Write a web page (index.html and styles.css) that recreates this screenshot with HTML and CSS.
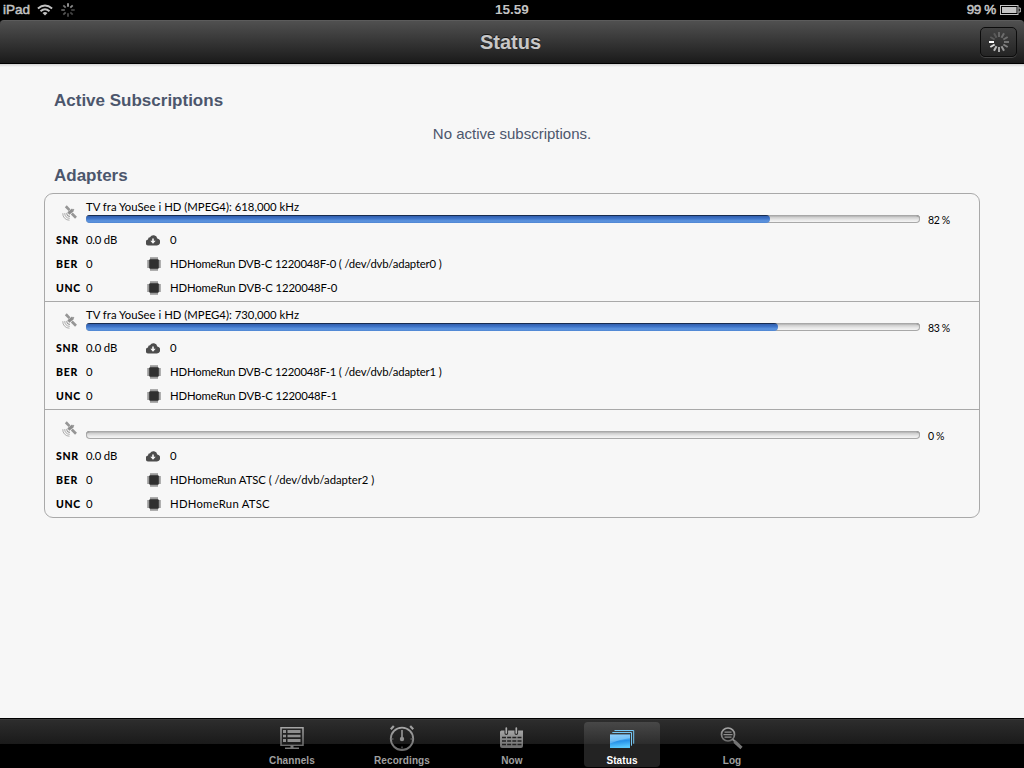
FILE: index.html
```html
<!DOCTYPE html>
<html lang="en">
<head>
<meta charset="utf-8">
<title>Status</title>
<link rel="stylesheet" href="styles.css">
</head>
<body>
<svg class="defs" width="0" height="0" aria-hidden="true">
  <defs>
    <linearGradient id="gray" x1="0" y1="0" x2="0" y2="1"><stop offset="0" stop-color="#a6a6a6"/><stop offset="1" stop-color="#6c6c6c"/></linearGradient>
    <linearGradient id="blue" x1="0" y1="0" x2=".15" y2="1"><stop offset="0" stop-color="#7cc4f7"/><stop offset=".45" stop-color="#4aa9f0"/><stop offset=".55" stop-color="#2590e8"/><stop offset="1" stop-color="#58c8ff"/></linearGradient>
    <symbol id="sat" viewBox="0 0 16 16">
      <path d="M3.800 1.300l3.700 3.800M9.800 8.500l4.200 4.200" stroke="#969696" stroke-width="2.700"/>
      <path d="M6.300 8.600l4.700-3.800" stroke="#8d8d8d" stroke-width="3.200"/>
      <path d="M10.500 5.400l1.500-1.200" stroke="#999" stroke-width="1.300"/>
      <path d="M4.900 8a2.700 2.700 0 0 0 3 3.300" fill="none" stroke="#999" stroke-width="1.100"/>
      <path d="M2.800 8a4.700 4.700 0 0 0 5 5.300M.8 8.200a6.500 6.500 0 0 0 6.700 7" fill="none" stroke="#a5a5a5" stroke-width=".9"/>
    </symbol>
    <symbol id="cloud" viewBox="0 0 14 11">
      <path d="M3.200 10.500A3 3 0 0 1 2 4.600 2.200 2.200 0 0 1 4 2.300 3.900 3.900 0 0 1 11.300 3.400 3.600 3.600 0 0 1 11 10.500z" fill="#4d4d4d"/>
      <path d="M6.200 3.600h1.600v2.200h1.900L7 8.800 4.300 5.800h1.900z" fill="#f7f7f7"/>
    </symbol>
    <symbol id="chip" viewBox="0 0 14 14">
      <path d="M3 .3h8v13.400H3zM.3 3h13.400v8H.3z" fill="#aaa"/>
      <path d="M4 .3v13.400M6 .3v13.400M8 .3v13.400M10 .3v13.400M.3 4h13.400M.3 6h13.400M.3 8h13.400M.3 10h13.400" stroke="#858585" stroke-width=".8"/>
      <rect x="2.200" y="2.200" width="9.600" height="9.600" rx="1" fill="#303030"/>
    </symbol>
  </defs>
</svg>

<div class="status-bar">
  <div class="carrier">
    <span>iPad</span>
    <svg class="wifi" width="16" height="12" viewBox="0 0 16 12" fill="none" stroke="#c4c4c4" stroke-width="1.900"><path d="M.9 4.500Q8-1.700 15.100 4.500M3.500 7.200Q8 3.200 12.500 7.200"/><path d="M5.500 9Q8 6.800 10.500 9L8 11.600z" fill="#c4c4c4" stroke="none"/></svg>
    <svg class="activity" width="14" height="14" viewBox="-7 -7 14 14" stroke-width="1.700">
      <path d="M0-3.200V-6.700" stroke="#aaa"/><path d="M2.300-2.300l2.400-2.400" stroke="#8b8b8b"/><path d="M3.200 0h3.500" stroke="#444"/><path d="M2.300 2.300l2.400 2.400" stroke="#444"/><path d="M0 3.200v3.500" stroke="#4c4c4c"/><path d="M-2.300 2.300l-2.400 2.400" stroke="#555"/><path d="M-3.200 0h-3.500" stroke="#666"/><path d="M-2.300-2.300l-2.400-2.400" stroke="#777"/>
    </svg>
  </div>
  <div class="clock">15.59</div>
  <div class="power"><span>99 %</span>
    <svg width="21" height="10" viewBox="0 0 21 10"><rect x=".5" y=".5" width="17.500" height="9" fill="none" stroke="#c4c4c4"/><path d="M2 2h14.500v6H2z" fill="#c4c4c4"/><path d="M18.500 3h1.800v4h-1.800" fill="none" stroke="#c4c4c4"/></svg>
  </div>
</div>

<div class="nav-wrap">
  <header class="nav-bar">
    <h1>Status</h1>
    <div class="refresh">
      <svg width="22" height="22" viewBox="-11 -11 22 22" stroke-width="2">
        <path d="M-5 0h-5" stroke="#fff"/><path d="M-5 0h-5" transform="rotate(30)" stroke="#5a5a5a"/><path d="M-5 0h-5" transform="rotate(60)" stroke="#5a5a5a"/><path d="M-5 0h-5" transform="rotate(90)" stroke="#666"/><path d="M-5 0h-5" transform="rotate(120)" stroke="#6c6c6c"/><path d="M-5 0h-5" transform="rotate(150)" stroke="#6e6e6e"/><path d="M-5 0h-5" transform="rotate(180)" stroke="#747474"/><path d="M-5 0h-5" transform="rotate(210)" stroke="#808080"/><path d="M-5 0h-5" transform="rotate(240)" stroke="#959595"/><path d="M-5 0h-5" transform="rotate(270)" stroke="#aaa"/><path d="M-5 0h-5" transform="rotate(300)" stroke="#bbb"/><path d="M-5 0h-5" transform="rotate(330)" stroke="#ddd"/>
      </svg>
    </div>
  </header>
</div>

<main>
  <h2>Active Subscriptions</h2>
  <p class="empty">No active subscriptions.</p>
  <h2 class="adapters-title">Adapters</h2>
  <section class="card">
    <article class="adapter">
      <div class="head">
        <svg class="sat" width="16" height="16"><use href="#sat"/></svg>
        <div class="signal"><div class="title">TV fra YouSee i HD (MPEG4): 618,000 kHz</div><div class="track"><div class="fill" style="width:82%"></div></div></div>
        <span class="percent">82 %</span>
      </div>
      <div class="line"><b>SNR</b><span class="value">0.0 dB</span><svg class="cloud" width="14" height="11"><use href="#cloud"/></svg><span>0</span></div>
      <div class="line"><b>BER</b><span class="value">0</span><svg width="14" height="14"><use href="#chip"/></svg><span class="path">HDHomeRun DVB-C 1220048F-0 ( /dev/dvb/adapter0 )</span></div>
      <div class="line"><b>UNC</b><span class="value">0</span><svg width="14" height="14"><use href="#chip"/></svg><span class="name">HDHomeRun DVB-C 1220048F-0</span></div>
    </article>
    <article class="adapter">
      <div class="head">
        <svg class="sat" width="16" height="16"><use href="#sat"/></svg>
        <div class="signal"><div class="title">TV fra YouSee i HD (MPEG4): 730,000 kHz</div><div class="track"><div class="fill" style="width:83%"></div></div></div>
        <span class="percent">83 %</span>
      </div>
      <div class="line"><b>SNR</b><span class="value">0.0 dB</span><svg class="cloud" width="14" height="11"><use href="#cloud"/></svg><span>0</span></div>
      <div class="line"><b>BER</b><span class="value">0</span><svg width="14" height="14"><use href="#chip"/></svg><span class="path">HDHomeRun DVB-C 1220048F-1 ( /dev/dvb/adapter1 )</span></div>
      <div class="line"><b>UNC</b><span class="value">0</span><svg width="14" height="14"><use href="#chip"/></svg><span class="name">HDHomeRun DVB-C 1220048F-1</span></div>
    </article>
    <article class="adapter atsc">
      <div class="head">
        <svg class="sat" width="16" height="16"><use href="#sat"/></svg>
        <div class="signal"><div class="title"></div><div class="track"></div></div>
        <span class="percent">0 %</span>
      </div>
      <div class="line"><b>SNR</b><span class="value">0.0 dB</span><svg class="cloud" width="14" height="11"><use href="#cloud"/></svg><span>0</span></div>
      <div class="line"><b>BER</b><span class="value">0</span><svg width="14" height="14"><use href="#chip"/></svg><span class="path">HDHomeRun ATSC ( /dev/dvb/adapter2 )</span></div>
      <div class="line"><b>UNC</b><span class="value">0</span><svg width="14" height="14"><use href="#chip"/></svg><span class="name">HDHomeRun ATSC</span></div>
    </article>
  </section>
</main>

<nav class="tab-bar">
  <div class="tab">
    <svg width="30" height="30" viewBox="0 1 30 30"><path d="M4 4.700h22v17.500H4z" fill="none" stroke="url(#gray)" stroke-width="1.500"/><path d="M6 7h3v3H6zM10.500 7h13v3h-13zM6 11.700h3v2.600H6zM10.500 11.700h13v2.600h-13zM6 16h3v3H6zM10.500 16h13v3h-13z" fill="#8e8e8e"/><path d="M13.500 22h3v2.500h5.500v1.500H8v-1.500h5.500z" fill="#777"/></svg>
    <span>Channels</span>
  </div>
  <div class="tab">
    <svg width="30" height="30" viewBox="0 .5 30 30"><circle cx="15" cy="15.300" r="11.200" fill="none" stroke="url(#gray)" stroke-width="1.900"/><path d="M3.800 5.700l3-3.200M26.200 5.700l-3-3.200" stroke="#a0a0a0" stroke-width="2.200"/><path d="M15 6.500v9" stroke="#999" stroke-width="1.600"/><circle cx="15" cy="15.500" r="2.200" fill="#909090"/><path d="M15 23v2M6.500 15.500h-2M25.500 15.500h-2" stroke="#777" stroke-width="1"/></svg>
    <span>Recordings</span>
  </div>
  <div class="tab">
    <svg width="30" height="30" viewBox="0 0 30 30"><path d="M4.500 6.500h3v2.800a1.800 1.800 0 0 0 3.600 0V6.500h6.400v2.800a1.800 1.800 0 0 0 3.600 0V6.500H26v15.500q0 2-2 2H5q-2 0-2-2V8q0-1.500 1.500-1.500z" fill="url(#gray)"/><path d="M9.300 4v5M19.300 4v5" stroke="#aaa" stroke-width="1.700" stroke-linecap="round"/><path d="M5 13.500h19.500M5 17h19.500M5 20.500h19.500" stroke="#222" stroke-width="1.700" stroke-dasharray="4 1.160"/></svg>
    <span>Now</span>
  </div>
  <div class="tab active">
    <svg width="30" height="30" viewBox="0 -1 30 30"><path d="M7.500 5.500h19.200v13.200M5.300 7.500h19.200v13.200" fill="none" stroke="#75c8f6" stroke-width="1"/><rect x="3" y="9.500" width="20" height="13.500" fill="url(#blue)"/><path d="M3 9.500h20v3.500Q13 14 3 18.500z" fill="#b0e2ff" opacity=".4"/></svg>
    <span>Status</span>
  </div>
  <div class="tab">
    <svg width="30" height="30" viewBox="0 0 30 30"><circle cx="11" cy="10.500" r="6.500" fill="none" stroke="url(#gray)" stroke-width="1.700"/><path d="M7.500 8.200h7M6.500 10.700h9M7.500 13.200h7" stroke="#8c8c8c" stroke-width="1.300"/><path d="M15.500 15.200l2.500 2.300" stroke="#888" stroke-width="1.800"/><path d="M17.500 17.500l7 6.500" stroke="#737373" stroke-width="3.200"/></svg>
    <span>Log</span>
  </div>
</nav>
</body>
</html>
```
FILE: styles.css
```css
* { box-sizing: border-box; }
body {
  margin: 0;
  width: 1024px;
  height: 768px;
  display: flex;
  flex-direction: column;
  overflow: hidden;
  background: #f7f7f7;
  font-family: "Liberation Sans", Arial, sans-serif;
}
svg { display: block; flex: none; }
.defs { position: absolute; }
h1, h2, p { margin: 0; }

.status-bar {
  height: 20px;
  flex: none;
  display: grid;
  grid-template-columns: 1fr auto 1fr;
  align-items: center;
  padding: 0 3px;
  background: #000;
  color: #c4c4c4;
  font-size: 13.500px;
  line-height: 18px;
}
.carrier { display: flex; align-items: center; }
.carrier span { width: 34px; margin-top: -1px; -webkit-text-stroke: .5px #c4c4c4; }
.activity { margin-left: 8px; }
.clock { margin-top: -1px; font-weight: bold; }
.power { display: flex; align-items: center; justify-content: flex-end; gap: 4px; -webkit-text-stroke: .5px #c4c4c4; }
.power span { margin-top: -1px; letter-spacing: -.35px; }
.power svg { margin-top: -1px; }

.nav-wrap { height: 44px; flex: none; background: #000; }
.nav-bar {
  height: 43px;
  display: grid;
  grid-template-columns: 1fr auto 1fr;
  align-items: center;
  padding: 0 7px 0 0;
  border-radius: 4px 4px 0 0;
  border-top: 1px solid #5c5c5c;
  background: linear-gradient(#505050, #1a1a1a);
}
.nav-bar h1 {
  grid-column: 2;
  margin-left: 4px;
  font-size: 20px;
  line-height: 24px;
  color: #c8c8c8;
  text-shadow: 0 -1px 0 #151515;
}
.refresh {
  justify-self: end;
  width: 37px;
  height: 30px;
  display: flex;
  align-items: center;
  justify-content: center;
  border: 1px solid #0c0c0c;
  border-radius: 5px;
  background: linear-gradient(#424242, #242424);
  box-shadow: 0 1px 0 #444;
}

main {
  flex: 1;
  padding: 25px 44px 0;
  background: linear-gradient(#d2d2d2, #f7f7f7 3px);
}
h2 {
  padding-left: 10px;
  font-size: 17px;
  line-height: 24px;
  color: #4c566c;
}
.empty { margin-top: 9px; text-align: center; font-size: 15px; line-height: 24px; color: #4c566c; }
.adapters-title { margin-top: 18px; }
.card {
  margin-top: 5px;
  border: 1px solid #a9a9a9;
  border-radius: 9px;
  color: #000;
  font: 11.300px/24px Lato, sans-serif;
}
.adapter { height: 108px; border-bottom: 1px solid #a9a9a9; }
.adapter:last-child { height: 107px; border-bottom: 0; }
.head { height: 34px; display: flex; padding-left: 17px; }
.sat { margin-top: 11px; }
.signal { width: 834px; margin-left: 8px; }
.title { height: 21px; line-height: 26px; letter-spacing: .02px; }
.track {
  height: 8px;
  border-radius: 4px;
  background: linear-gradient(#999, #d0d0d0 30%, #e8e8e8 60%, #fafafa);
  box-shadow: inset 0 0 0 1px #a8a8a8, inset 0 1px 0 #666;
}
.fill {
  height: 8px;
  border-radius: 4px;
  background: linear-gradient(#172c50 0 12%, #315fae 14%, #3f75c9 45%, #5e95df 75%, #4f86d2);
}
.percent { margin: 14px 0 0 8px; font-size: 10.500px; letter-spacing: -.35px; }
.line { height: 24px; display: flex; align-items: center; padding-left: 11px; }
.line b { width: 30px; font-weight: 900; font-size: 10.500px; letter-spacing: .7px; }
.value { width: 60px; letter-spacing: -.2px; }
.line svg { width: 14px; margin-right: 10px; margin-left: 1px; }
.line svg + span { margin-left: -1px; }
.line .cloud { margin-left: 0; margin-right: 11px; }
.path { letter-spacing: -.16px; }
.name { letter-spacing: -.12px; }
.atsc .path { letter-spacing: -.03px; }
.atsc .name { letter-spacing: .26px; }

.tab-bar {
  height: 50px;
  flex: none;
  display: flex;
  justify-content: center;
  gap: 34px;
  padding-top: 2px;
  border-top: 1px solid #000;
  background: linear-gradient(#3b3b3b 0 1px, #2d2d2d 1px, #1a1a1a 25px, #000 25px);
}
.tab {
  width: 76px;
  height: 45px;
  margin-top: 1px;
  padding-top: 2px;
  display: flex;
  flex-direction: column;
  align-items: center;
  border-radius: 4px;
  color: #a0a0a0;
  font-size: 10px;
  font-weight: bold;
  line-height: 12px;
  letter-spacing: .1px;
}
.tab span { margin-top: 1px; }
.tab.active { background: linear-gradient(#484848, #2d2d2d 48%, #232323 50%); color: #fff; }
```
